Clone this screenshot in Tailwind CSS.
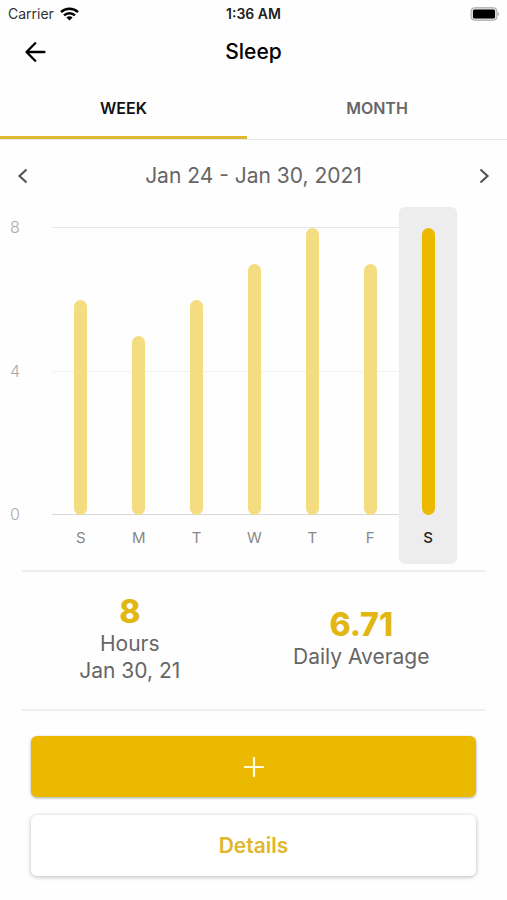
<!DOCTYPE html>
<html lang="en">
<head>
    <meta charset="UTF-8">
    <meta name="viewport" content="width=device-width, initial-scale=1.0" />
    <script src="https://cdn.jsdelivr.net/npm/@tailwindcss/browser@4"></script>
    <title>Sleep</title>
</head>
<body class="min-h-screen bg-[#fefefe] font-['Inter','Liberation_Sans',sans-serif] text-[#666]">

<!-- status bar -->
<div class="grid h-7 grid-cols-3 items-center px-2 text-sm">
    <div class="flex items-center gap-1.5 text-[#333]">
        <span>Carrier</span>
        <svg class="h-[14px] w-[19px]" viewBox="0 0 19 14" fill="none" stroke="#000" stroke-width="2.4">
            <path d="M1 5.2a12.3 12.3 0 0 1 17 0" />
            <path d="M4 8.4a8 8 0 0 1 11 0" />
            <path d="M9.500 13.600 6.400 10.500a4.400 4.400 0 0 1 6.200 0z" fill="#000" stroke="none" />
        </svg>
    </div>
    <span class="text-center font-semibold text-[#222]">1:36 AM</span>
    <svg class="h-[14px] w-[30px] justify-self-end" viewBox="0 0 30 14">
        <rect x="2" y="0.700" width="26" height="12.600" rx="3.500" fill="#ddd" stroke="#aaa" stroke-width="1" />
        <rect x="4" y="2.500" width="22" height="9" rx="1.500" fill="#000" />
        <path d="M28.800 5v4q1.200-.6 1.200-2t-1.200-2" fill="#aaa" />
    </svg>
</div>

<header class="grid h-12 grid-cols-[40px_1fr_40px] items-center px-4">
    <button type="button" aria-label="Back" class="flex size-10 items-center justify-center">
        <svg class="h-5 w-6" viewBox="0 0 24 20" fill="none" stroke="#000" stroke-width="2.300" stroke-linecap="round" stroke-linejoin="round">
            <path d="M20.500 10H3M11.200 1.200 2.500 10l8.700 8.800" />
        </svg>
    </button>
    <h1 class="text-center text-[21px] font-medium text-black">Sleep</h1>
</header>

<nav class="flex h-16 border-b border-[#e6e6e6] text-base font-semibold">
    <button type="button" class="w-[247px] max-w-1/2 grow border-b-3 border-[#dfb92f] pt-1 text-[#111]">WEEK</button>
    <button type="button" class="w-[260px] grow border-b-3 border-transparent pt-1">MONTH</button>
</nav>

<main>
    <div class="mt-4 flex h-10 items-center justify-between px-[11px]">
        <button type="button" aria-label="Previous week" class="flex size-6 items-center justify-center">
            <svg class="size-4" viewBox="0 0 16 16" fill="none" stroke="#555" stroke-width="2.200"><path d="m11.500 1.500-7 6.500 7 6.500" /></svg>
        </button>
        <span class="text-[21px]">Jan 24 - Jan 30, 2021</span>
        <button type="button" aria-label="Next week" class="flex size-6 items-center justify-center">
            <svg class="size-4" viewBox="0 0 16 16" fill="none" stroke="#555" stroke-width="2.200"><path d="m4.500 1.500 7 6.500-7 6.500" /></svg>
        </button>
    </div>

    <!-- chart -->
    <div class="mt-[11px] flex pr-[50px]">
        <div class="-mb-2 mt-2 flex h-[311px] w-[52px] flex-col justify-between pl-2.5 text-base leading-6 font-light text-[#aaa]">
            <span>8</span>
            <span>4</span>
            <span>0</span>
        </div>
        <div class="relative grow">
            <div class="absolute inset-x-0 top-5 flex h-[288px] flex-col justify-between">
                <div class="h-px bg-[#e6e6e6]"></div>
                <div class="h-px bg-[#f2f2f2]"></div>
                <div class="h-px bg-[#d8d8d8]"></div>
            </div>
            <div id="bars" class="relative grid grid-cols-7"></div>
        </div>
    </div>

    <!-- totals -->
    <section class="mx-[22px] mt-1.5 h-[141px] border-y-2 border-[#eee]">
        <div class="-ml-2 mr-2 grid h-full grid-cols-2 items-center pb-1 text-center text-[21px] leading-[27px]">
            <div>
                <p class="text-[32px] leading-9 font-extrabold text-[#e2b714]">8</p>
                <p>Hours</p>
                <p>Jan 30, 21</p>
            </div>
            <div>
                <p class="text-[32px] leading-9 font-extrabold text-[#e2b714]">6.71</p>
                <p>Daily Average</p>
            </div>
        </div>
    </section>

    <div class="flex flex-col gap-[18px] px-[31px] pt-[25px] pb-6">
        <button type="button" aria-label="Add" class="flex h-[61px] items-center justify-center rounded-md bg-[#ebba00] shadow-[0_1px_3px_rgba(0,0,0,0.35)]">
            <svg class="size-5" viewBox="0 0 20 20" stroke="#fffbe0" stroke-width="2.200" stroke-linecap="round"><path d="M10 1v18M1 10h18" /></svg>
        </button>
        <button type="button" class="h-[61px] rounded-md bg-white text-[21px] font-semibold text-[#dfb72c] shadow-[0_1px_4px_rgba(0,0,0,0.28)]">Details</button>
    </div>
</main>

<script>
    const days = [
        { label: 'S', hours: 6 },
        { label: 'M', hours: 5 },
        { label: 'T', hours: 6 },
        { label: 'W', hours: 7 },
        { label: 'T', hours: 8 },
        { label: 'F', hours: 7 },
        { label: 'S', hours: 8, selected: true },
    ];
    let barsHTML = '';
    for (const day of days) {
        barsHTML += `
        <button type="button" class="flex flex-col items-center rounded-md pt-[21px] ${day.selected ? 'bg-[#ededed]' : ''}">
            <span class="flex h-[287px] items-end">
                <span class="w-[13px] rounded-full ${day.selected ? 'bg-[#ebba00]' : 'bg-[#f4dd80]'}" style="height: ${day.hours / 8 * 100}%"></span>
            </span>
            <span class="pt-3 pb-[15px] text-[15px] leading-[22px] ${day.selected ? 'font-medium text-[#222]' : 'text-[#888]'}">${day.label}</span>
        </button>`;
    }
    document.getElementById('bars').innerHTML = barsHTML;
</script>
</body>
</html>
